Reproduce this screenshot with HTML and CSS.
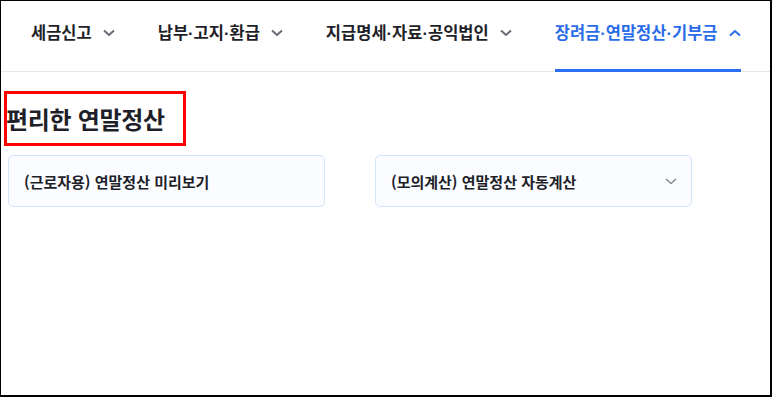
FILE: index.html
```html
<!DOCTYPE html>
<html lang="ko">

<head>
    <meta charset="UTF-8">
    <meta name="viewport" content="width=device-width, initial-scale=1.0">
    <title>연말정산</title>
    <link rel="stylesheet" href="styles.css">
</head>

<body>
    <div class="frame">
        <nav class="gnb">
            <ul class="gnb-list">
                <li class="gnb-item">
                    <span>세금신고</span>
                    <svg class="chevron" width="12" height="8" viewBox="0 0 12 8"><path d="M1 1.5 L6 6 L11 1.5" /></svg>
                </li>
                <li class="gnb-item">
                    <span>납부<i class="dot">·</i>고지<i class="dot">·</i>환급</span>
                    <svg class="chevron" width="12" height="8" viewBox="0 0 12 8"><path d="M1 1.5 L6 6 L11 1.5" /></svg>
                </li>
                <li class="gnb-item">
                    <span>지급명세<i class="dot">·</i>자료<i class="dot">·</i>공익법인</span>
                    <svg class="chevron" width="12" height="8" viewBox="0 0 12 8"><path d="M1 1.5 L6 6 L11 1.5" /></svg>
                </li>
                <li class="gnb-item active">
                    <span>장려금<i class="dot">·</i>연말정산<i class="dot">·</i>기부금</span>
                    <svg class="chevron" width="12" height="8" viewBox="0 0 12 8"><path d="M1 6.5 L6 2 L11 6.5" /></svg>
                </li>
            </ul>
        </nav>

        <main class="content">
            <h2 class="title">편리한 연말정산</h2>

            <div class="menu-row">
                <button class="menu-card">(근로자용) 연말정산 미리보기</button>
                <button class="menu-card">
                    <span>(모의계산) 연말정산 자동계산</span>
                    <svg class="card-chevron" width="12" height="7" viewBox="0 0 12 7"><path d="M1 1 L6 5.5 L11 1" /></svg>
                </button>
            </div>
        </main>
    </div>
</body>

</html>
```

FILE: styles.css
```css
body {
    margin: 0;
    padding: 0;
    background-color: #fff;
    font-family: "Noto Sans CJK KR", "Noto Sans", sans-serif;
    color: #1f1f29;
}

.frame {
    width: 772px;
    height: 397px;
    box-sizing: border-box;
    border-style: solid;
    border-color: #000;
    border-width: 1px 2px 2px 1px;
    overflow: hidden;
}

.gnb {
    height: 71px;
    box-sizing: border-box;
    border-bottom: 1px solid #e6e7ea;
}

.gnb-list {
    display: flex;
    gap: 43px;
    margin: 0;
    padding: 0 0 0 30px;
    list-style: none;
    height: 70px;
}

.gnb-item {
    display: flex;
    align-items: flex-start;
    padding-top: 19px;
    box-sizing: border-box;
    margin-bottom: -1px;
    font-size: 16.5px;
    line-height: 24px;
    font-weight: 600;
    border-bottom: 3px solid transparent;
}

.gnb-item .dot {
    font-family: "Liberation Sans", sans-serif;
    font-style: normal;
    font-weight: 700;
}

.gnb-item .chevron {
    margin: 9px 0 0 11px;
    fill: none;
    stroke: #6a6a74;
    stroke-width: 2;
}

.gnb-item.active {
    color: #2b6de8;
    border-bottom-color: #2a6ff2;
}

.gnb-item.active .chevron {
    stroke: #2b6de8;
}

.content {
    padding: 19px 7px 0;
}

.title {
    width: 176px;
    height: 49px;
    margin: 0 0 0 -4px;
    border: 3px solid #f00;
    font-size: 24px;
    line-height: 49px;
    font-weight: 700;
    letter-spacing: -0.3px;
    text-indent: -1px;
}

.menu-row {
    display: flex;
    gap: 50px;
    margin-top: 9px;
}

.menu-card {
    display: flex;
    align-items: center;
    justify-content: space-between;
    width: 317px;
    height: 52px;
    padding: 0 14px 0 15px;
    box-sizing: border-box;
    background-color: #fafcff;
    border: 1px solid #d5e3fb;
    border-radius: 5px;
    font-family: inherit;
    font-size: 15px;
    font-weight: 600;
    color: #1f1f29;
    text-align: left;
}

.card-chevron {
    fill: none;
    stroke: #7a7a84;
    stroke-width: 1.2;
}
```
